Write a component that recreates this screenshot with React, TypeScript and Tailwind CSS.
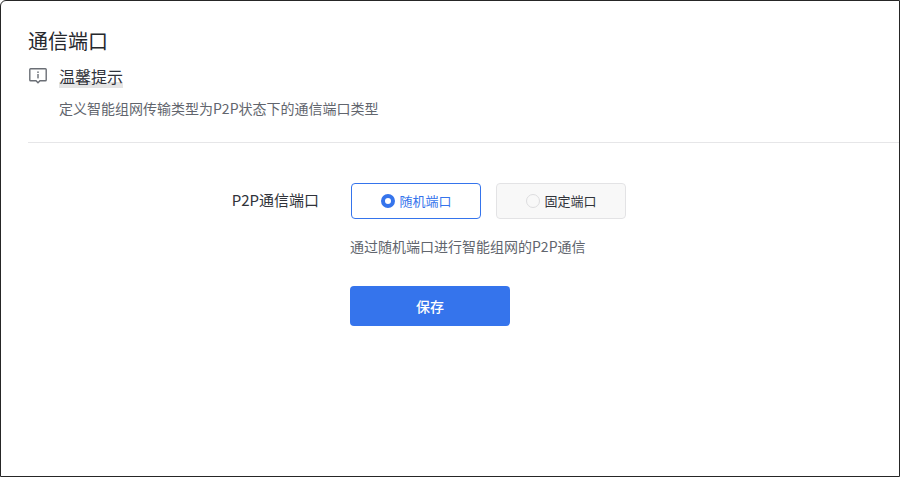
import type { ReactNode } from "react";

const font = { fontFamily: '"Noto Sans CJK SC", "Liberation Sans", sans-serif' };

function HintIcon() {
  return (
    <svg width="18" height="16" viewBox="0 0 18 16" fill="none" className="shrink-0">
      <path
        d="M1.6 0.8H16.4C16.8 0.8 17.2 1.2 17.2 1.6V12C17.2 12.4 16.8 12.8 16.4 12.8H11L9 14.8L7 12.8H1.6C1.2 12.8 0.8 12.4 0.8 12V1.6C0.8 1.2 1.2 0.8 1.6 0.8Z"
        stroke="#6a6e75"
        strokeWidth="1.4"
      />
      <rect x="8.3" y="3.4" width="1.4" height="1.6" fill="#6a6e75" />
      <rect x="8.3" y="6" width="1.4" height="4.4" fill="#6a6e75" />
    </svg>
  );
}

function PortOption({ active, children }: { active?: boolean; children: ReactNode }) {
  return (
    <div
      className={
        active
          ? "flex h-[36px] w-[130px] items-center justify-center gap-[4px] rounded-[4px] border border-[#3574ec] bg-white text-[13px] text-[#3574ec]"
          : "flex h-[36px] w-[130px] items-center justify-center gap-[4px] rounded-[4px] border border-[#e3e3e5] bg-[#f8f8f8] text-[13px] text-[#30333a]"
      }
    >
      {active ? (
        <span className="ml-px h-[14px] w-[14px] rounded-full border-[4px] border-[#3574ec] bg-white" />
      ) : (
        <span className="ml-px h-[14px] w-[14px] rounded-full border border-[#dddddf] bg-[#f8f8f8]" />
      )}
      <span>{children}</span>
    </div>
  );
}

export default function App() {
  return (
    <div
      className="h-[477px] w-[900px] overflow-hidden rounded-tl-[6px] border border-[#262626] bg-white"
      style={font}
    >
      <div className="pt-[26px] pl-[27px]">
        <h1 className="text-[20px] leading-[28px] font-normal text-[#26282d]">通信端口</h1>
        <div className="mt-[9px] flex items-center gap-[12px]">
          <div className="ml-px">
            <HintIcon />
          </div>
          <span className="bg-[linear-gradient(to_top,#e4e4e4_6px,transparent_6px)] text-[16px] leading-[24px] text-[#30333a]">
            温馨提示
          </span>
        </div>
        <p className="mt-[10px] pl-[31px] text-[14px] leading-[20px] text-[#61656d]">
          定义智能组网传输类型为P2P状态下的通信端口类型
        </p>
        <div className="mt-[24px] h-px bg-[#e6e6e8]" />
      </div>
      <div className="mt-[40px] flex">
        <div className="w-[318px] pt-[7px] text-right text-[15px] leading-[20px] text-[#30333a]">P2P通信端口</div>
        <div className="ml-[32px]">
          <div className="flex gap-[15px]">
            <PortOption active>随机端口</PortOption>
            <PortOption>固定端口</PortOption>
          </div>
          <p className="mt-[17px] -ml-px text-[14px] leading-[20px] text-[#61656d]">
            通过随机端口进行智能组网的P2P通信
          </p>
          <button className="mt-[30px] -ml-px flex h-[40px] w-[160px] items-center justify-center rounded-[4px] bg-[#3574ec] text-[14px] font-medium text-white">
            保存
          </button>
        </div>
      </div>
    </div>
  );
}
